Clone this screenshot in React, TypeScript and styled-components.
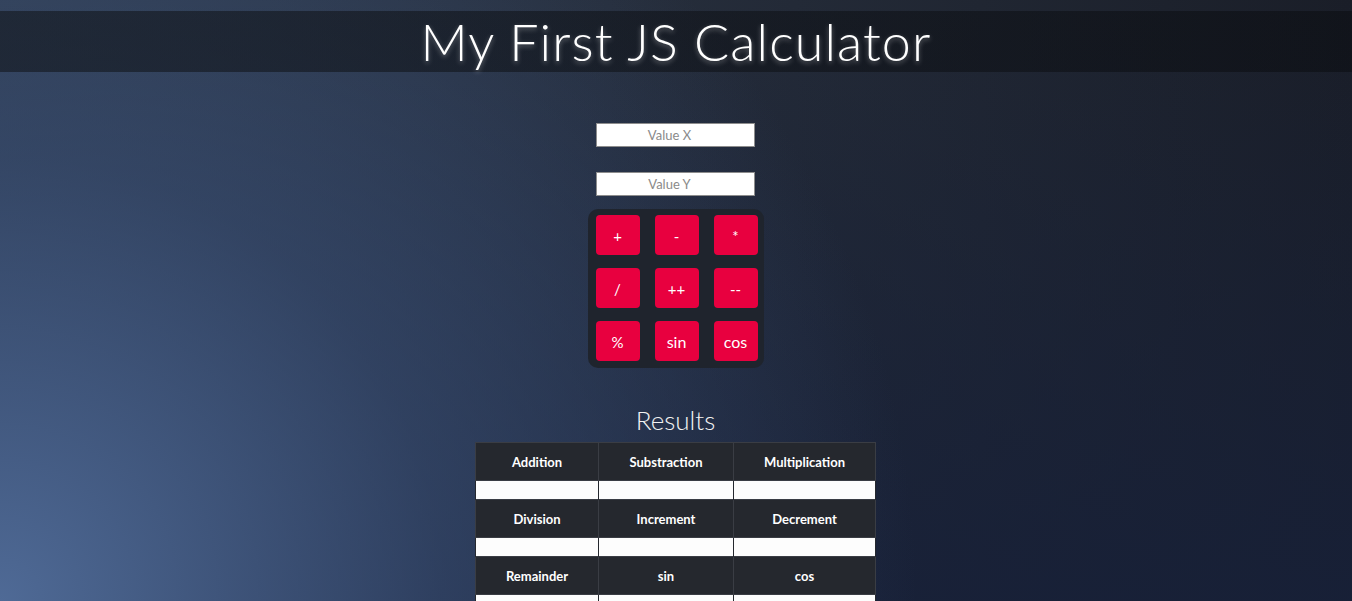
import React from "react";
import styled, { createGlobalStyle } from "styled-components";

const GlobalStyle = createGlobalStyle`
  html, body {
    margin: 0;
    padding: 0;
  }
  body {
    min-height: 601px;
    font-family: Lato, "Noto Sans", sans-serif;
    background:
      radial-gradient(circle at 0% 100%, rgba(79, 106, 150, 1) 0%, rgba(60, 82, 120, 0.6) 30%, rgba(40, 55, 85, 0) 62%),
      linear-gradient(to bottom, rgba(23, 32, 56, 0) 0%, rgba(23, 32, 56, 0.9) 100%),
      linear-gradient(to right, #2e3a4c 0%, #262e3c 45%, #1a1e28 100%);
    background-attachment: fixed;
  }
`;

const Page = styled.div`
  min-height: 601px;
  padding-top: 11px;
  box-sizing: border-box;
  overflow: hidden;
`;

const Title = styled.h1`
  margin: 0;
  height: 61px;
  line-height: 61px;
  text-align: center;
  font-size: 52px;
  font-weight: 300;
  color: #ffffff;
  letter-spacing: 1.1px;
  background: linear-gradient(to right, rgba(18, 22, 28, 0.6) 0%, rgba(10, 12, 16, 0.55) 100%);
  text-shadow: 0 2px 5px rgba(255, 255, 255, 0.35);
`;

const Main = styled.main`
  display: flex;
  flex-direction: column;
  align-items: center;
  padding-top: 51px;
  padding-right: 1px;
`;

const Field = styled.input`
  box-sizing: border-box;
  width: 159px;
  height: 24px;
  margin: 0 0 25px;
  padding: 0 12px 0 0;
  border: 1px solid #8d8d8d;
  background: #ffffff;
  text-align: center;
  font-family: Lato, "Noto Sans", sans-serif;
  font-size: 13px;
  color: #333;
  outline: none;

  &::placeholder {
    color: #8a8a8a;
  }

  &:last-of-type {
    margin-bottom: 13px;
  }
`;

const Keypad = styled.div`
  display: grid;
  grid-template-columns: repeat(3, 44px);
  grid-auto-rows: 40px;
  column-gap: 15px;
  row-gap: 13px;
  padding: 6px 6px 7px 8px;
  background: #1f242d;
  border-radius: 10px;
`;

const Key = styled.button<{ $big?: boolean }>`
  border: none;
  border-radius: 4px;
  background: #e8003f;
  color: #ffffff;
  font-family: Lato, "Noto Sans", sans-serif;
  font-size: ${(p) => (p.$big ? "16px" : "15px")};
  padding: 1px 0 0;
  cursor: pointer;
`;

const ResultsTitle = styled.h2`
  margin: 37px 0 7px;
  font-size: 26px;
  font-weight: 300;
  color: #f2f2f2;
  line-height: 30px;
`;

const Table = styled.table`
  border-collapse: collapse;
  width: 400px;
  table-layout: fixed;
  border: 1px solid #3a3d44;
`;

const HeadCell = styled.th`
  height: 37px;
  padding: 0;
  background: #25282e;
  border: 1px solid #3a3d44;
  color: #ffffff;
  font-family: Lato, "Noto Sans", sans-serif;
  font-size: 13px;
  font-weight: 700;
  text-align: center;
`;

const ValueCell = styled.td`
  height: 18px;
  padding: 0;
  background: #fdfdfd;
  border-left: 1px solid #25282e;
  border-right: 1px solid #25282e;
`;

const keys = ["+", "-", "*", "/", "++", "--", "%", "sin", "cos"];
const rows = [
  ["Addition", "Substraction", "Multiplication"],
  ["Division", "Increment", "Decrement"],
  ["Remainder", "sin", "cos"],
];

export default function App() {
  return (
    <>
      <GlobalStyle />
      <Page>
        <Title>My First JS Calculator</Title>
        <Main>
          <Field placeholder="Value X" />
          <Field placeholder="Value Y" />
          <Keypad>
            {keys.map((k) => (
              <Key key={k} $big={k === "sin" || k === "cos"}>
                {k}
              </Key>
            ))}
          </Keypad>
          <ResultsTitle>Results</ResultsTitle>
          <Table>
            <colgroup>
              <col style={{ width: 123 }} />
              <col style={{ width: 135 }} />
              <col style={{ width: 142 }} />
            </colgroup>
            <tbody>
              {rows.map((r, i) => (
                <React.Fragment key={i}>
                  <tr>
                    {r.map((h) => (
                      <HeadCell key={h}>{h}</HeadCell>
                    ))}
                  </tr>
                  <tr>
                    {r.map((h) => (
                      <ValueCell key={h} />
                    ))}
                  </tr>
                </React.Fragment>
              ))}
            </tbody>
          </Table>
        </Main>
      </Page>
    </>
  );
}
